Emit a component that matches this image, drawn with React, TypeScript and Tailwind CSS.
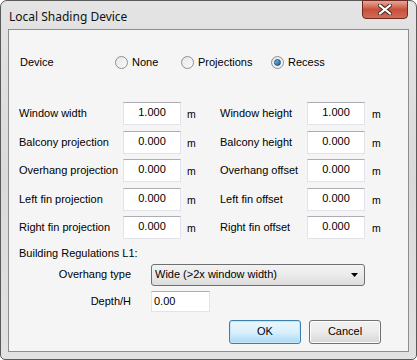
import React from 'react';

const font = { fontFamily: '"Liberation Sans", Arial, sans-serif' };

function Radio({ label, checked }: { label: string; checked?: boolean }) {
  return (
    <div className="flex items-center gap-[4px]">
      <span className="w-[13px] h-[13px] rounded-full border border-[#8e8f8f] bg-gradient-to-br from-[#e6e6e6] to-[#fafafa] flex items-center justify-center">
        {checked && (
          <span className="w-[7px] h-[7px] rounded-full bg-gradient-to-br from-[#7ec2ef] to-[#0c5c9a] border border-[#1a4f7a]" />
        )}
      </span>
      <span>{label}</span>
    </div>
  );
}

function NumBox({ value }: { value: string }) {
  return (
    <div className="w-[58px] h-[23px] bg-white border border-[#e2e3ea] border-t-[#abadb3] flex items-center justify-center pb-[2px]">
      {value}
    </div>
  );
}

const rows = [
  ['Window width', '1.000', 'Window height', '1.000'],
  ['Balcony projection', '0.000', 'Balcony height', '0.000'],
  ['Overhang projection', '0.000', 'Overhang offset', '0.000'],
  ['Left fin projection', '0.000', 'Left fin offset', '0.000'],
  ['Right fin projection', '0.000', 'Right fin offset', '0.000'],
];

export default function App() {
  return (
    <div
      className="w-[417px] h-[360px] bg-white text-[11px] text-black"
      style={font}
    >
      <div className="w-[417px] h-[360px] rounded-t-[7px] rounded-b-[5px] border border-[#5a5a5a] bg-gradient-to-b from-[#e4e4e4] via-[#dadada] to-[#e2e2e2] flex flex-col px-[7px] pb-[7px]">
        {/* Title bar */}
        <div className="h-[28px] flex items-start justify-between">
          <span className="text-[12px] mt-[7px] ml-[1px] text-[#111]" style={{ fontFamily: '"Noto Sans", "Liberation Sans", sans-serif' }}>
            Local Shading Device
          </span>
          <div className="w-[46px] h-[19px] -mt-[1px] mr-[1px] rounded-b-[4px] border border-[#6b2a22] bg-gradient-to-b from-[#e8a797] via-[#c94f3b] to-[#d06b55] flex items-center justify-center">
            <svg width="14" height="11" viewBox="0 0 14 11">
              <path d="M2 1.5 L12 9.5 M12 1.5 L2 9.5" stroke="#3b2420" strokeWidth="4" strokeLinecap="square" />
              <path d="M2 1.5 L12 9.5 M12 1.5 L2 9.5" stroke="#ffffff" strokeWidth="2.2" strokeLinecap="square" />
            </svg>
          </div>
        </div>

        {/* Client area */}
        <div className="flex-1 border border-[#8d8d8d] bg-[#f5f5f5] flex flex-col pl-[10px] pt-[24px]">
          {/* Device */}
          <div className="flex items-center h-[17px]">
            <span className="w-[96px] pl-[1px]">Device</span>
            <div className="w-[66px]">
              <Radio label="None" />
            </div>
            <div className="w-[90px]">
              <Radio label="Projections" />
            </div>
            <Radio label="Recess" checked />
          </div>

          {/* Dimension rows */}
          <div className="flex flex-col gap-[5.5px] mt-[31px]">
            {rows.map((r) => (
              <div key={r[0]} className="flex items-center h-[23px]">
                <span className="w-[104px]">{r[0]}</span>
                <NumBox value={r[1]} />
                <span className="w-[39px] pl-[6px] pt-[3px] text-[10.5px]">m</span>
                <span className="w-[87px]">{r[2]}</span>
                <NumBox value={r[3]} />
                <span className="pl-[7px] pt-[3px] text-[10.5px]">m</span>
              </div>
            ))}
          </div>

          <div className="mt-[6px]">Building Regulations L1:</div>

          <div className="flex items-center mt-[2px] h-[22px]">
            <span className="w-[112px] text-right">Overhang type</span>
            <div className="ml-[20px] w-[214px] h-[22px] rounded-[3px] border border-[#707070] bg-gradient-to-b from-[#f2f2f2] via-[#ebebeb] to-[#dcdcdc] flex items-center justify-between pl-[3px] pr-[6px]">
              <span>Wide (&gt;2x window width)</span>
              <svg width="7" height="4" viewBox="0 0 7 4">
                <path d="M0 0 H7 L3.5 4 Z" fill="#000" />
              </svg>
            </div>
          </div>

          <div className="flex items-center mt-[5px] h-[21px]">
            <span className="w-[112px] text-right">Depth/H</span>
            <div className="ml-[20px] w-[59px] h-[21px] bg-white border border-[#e2e3ea] border-t-[#abadb3] pl-[2px] pt-[1px]">
              0.00
            </div>
          </div>

          <div className="flex justify-end gap-[8px] mt-[8px] pr-[27px]">
            <button className="w-[72px] h-[24px] rounded-[3px] border border-[#3c7fb1] bg-gradient-to-b from-[#eaf6fd] via-[#d9f0fc] to-[#a7d9f5] shadow-[inset_0_0_0_1px_#c5e6f8]">
              OK
            </button>
            <button className="w-[72px] h-[24px] rounded-[3px] border border-[#707070] bg-gradient-to-b from-[#f2f2f2] via-[#ebebeb] to-[#d6d6d6] shadow-[inset_0_0_0_1px_#fcfcfc]">
              Cancel
            </button>
          </div>
        </div>
      </div>
    </div>
  );
}
